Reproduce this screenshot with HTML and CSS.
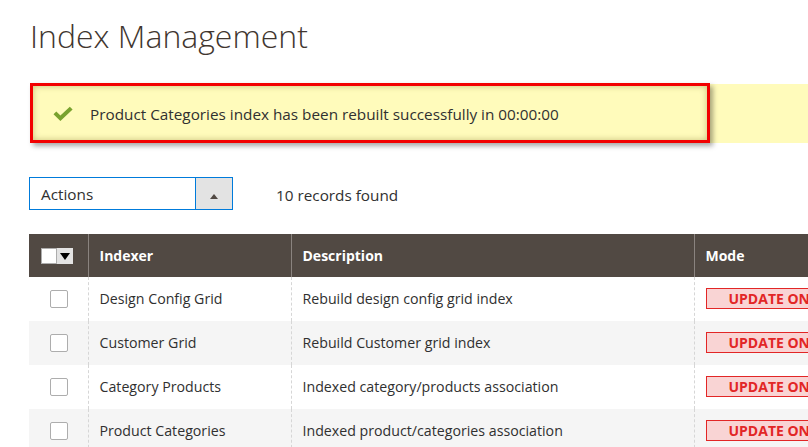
FILE: index.html
```html
<!DOCTYPE html>
<html>
<head>
<meta charset="utf-8">
<link rel="stylesheet" href="styles.css">
</head>
<body>
<div class="page">
  <h1 class="page-title">Index Management</h1>

  <div class="message-wrap">
    <div class="message">
      <svg class="check" width="22" height="16" viewBox="0 0 22 16"><path d="M1.5 8.2 L4.3 5.6 L8.4 9.6 L17.8 0.8 L20.6 3.4 L8.4 15 Z" fill="#79a22e"/></svg>
      <span>Product Categories index has been rebuilt successfully in 00:00:00</span>
    </div>
    <div class="annotation"></div>
  </div>

  <div class="toolbar">
    <div class="actions-select">
      <span class="actions-label">Actions</span>
      <span class="actions-btn"><span class="tri-up"></span></span>
    </div>
    <span class="records">10 records found</span>
  </div>

  <table class="grid">
    <colgroup>
      <col class="c-check"><col class="c-indexer"><col class="c-desc"><col class="c-mode">
    </colgroup>
    <thead>
      <tr>
        <th class="th-check"><span class="mass"><span class="mass-box"></span><span class="mass-arrow"><span class="tri-down"></span></span></span></th>
        <th>Indexer</th>
        <th>Description</th>
        <th>Mode</th>
      </tr>
    </thead>
    <tbody>
      <tr>
        <td class="td-check"><span class="cb"></span></td>
        <td>Design Config Grid</td>
        <td>Rebuild design config grid index</td>
        <td><span class="badge">UPDATE ON SAVE</span></td>
      </tr>
      <tr>
        <td class="td-check"><span class="cb"></span></td>
        <td>Customer Grid</td>
        <td>Rebuild Customer grid index</td>
        <td><span class="badge">UPDATE ON SAVE</span></td>
      </tr>
      <tr>
        <td class="td-check"><span class="cb"></span></td>
        <td>Category Products</td>
        <td>Indexed category/products association</td>
        <td><span class="badge">UPDATE ON SAVE</span></td>
      </tr>
      <tr>
        <td class="td-check"><span class="cb"></span></td>
        <td>Product Categories</td>
        <td>Indexed product/categories association</td>
        <td><span class="badge">UPDATE ON SAVE</span></td>
      </tr>
    </tbody>
  </table>
</div>
</body>
</html>
```

FILE: styles.css
```css
html, body {
  margin: 0;
  padding: 0;
  background: #fff;
  overflow: hidden;
}
body {
  font-family: "Open Sans", "Liberation Sans", sans-serif;
  color: #303030;
  font-size: 14px;
  width: 808px;
  height: 447px;
}
.page {
  width: 1100px;
  padding: 0 0 0 29px;
}
.page-title {
  margin: 0;
  padding-top: 14px;
  padding-left: 1px;
  font-size: 32px;
  font-weight: 300;
  line-height: 44px;
  color: #41362f;
  height: 70px;
}
.message-wrap {
  position: relative;
  margin-left: 1px;
}
.message {
  background: #fffbbb;
  height: 59px;
  display: flex;
  align-items: center;
  padding-left: 22px;
  box-sizing: border-box;
  font-size: 15.3px;
  color: #303030;
}
.check {
  margin-right: 16px;
  margin-top: 1px;
}
.message span {
  margin-top: 1px;
}
.annotation {
  position: absolute;
  left: 0;
  top: -1px;
  width: 680px;
  height: 60px;
  box-sizing: border-box;
  border: 3px solid #f20000;
  box-shadow: 3px 3px 5px rgba(0,0,0,0.35), inset 0 0 6px rgba(90,80,0,0.35);
}
.toolbar {
  display: flex;
  align-items: center;
  margin-top: 34px;
  height: 33px;
  font-size: 15.3px;
}
.actions-select {
  width: 204px;
  height: 33px;
  box-sizing: border-box;
  border: 1px solid #007bdb;
  display: flex;
  align-items: stretch;
}
.actions-label {
  flex: 1;
  padding-left: 11px;
  line-height: 33px;
  color: #303030;
}
.actions-btn {
  width: 36px;
  background: #e3e3e3;
  border-left: 1px solid #007bdb;
  display: flex;
  align-items: center;
  justify-content: center;
}
.tri-up {
  width: 0;
  height: 0;
  border-left: 4px solid transparent;
  border-right: 4px solid transparent;
  border-bottom: 5px solid #514943;
  margin-top: 6px;
}
.records {
  margin-left: 43px;
  color: #303030;
  margin-top: 3px;
}
.grid {
  margin-top: 24px;
  border-collapse: collapse;
  table-layout: fixed;
  width: 1060px;
}
.c-check { width: 59px; }
.c-indexer { width: 203px; }
.c-desc { width: 403px; }
.c-mode { width: 395px; }
.grid th {
  background: #514943;
  color: #fff;
  font-weight: 700;
  text-align: left;
  height: 43px;
  padding: 0 11px;
  border-left: 1px solid #8a837f;
  border-right: 1px solid #8a837f;
  box-sizing: border-box;
}
.grid th:first-child { border-left: none; }
.grid th.th-check { padding: 0 0 0 12px; }
.mass {
  display: inline-flex;
  height: 16px;
  vertical-align: middle;
  margin-top: -2px;
}
.mass-box {
  width: 16px;
  height: 16px;
  background: #fff;
  box-sizing: border-box;
  border: 1px solid #adadad;
}
.mass-arrow {
  width: 16px;
  height: 16px;
  background: #e3e3e3;
  display: flex;
  align-items: center;
  justify-content: center;
}
.tri-down {
  width: 0;
  height: 0;
  border-left: 5px solid transparent;
  border-right: 5px solid transparent;
  border-top: 7px solid #000;
}
.grid td {
  height: 44px;
  padding: 0 11px 2px;
  box-sizing: border-box;
  border-left: 1px dashed #d6d6d6;
  border-right: 1px dashed #d6d6d6;
  color: #303030;
  white-space: nowrap;
  font-size: 14.2px;
}
.grid td:first-child { border-left: none; }
.grid tbody tr:nth-child(even) td { background: #f5f5f5; }
.grid td.td-check { padding: 0 0 0 21px; }
.cb {
  display: block;
  width: 18px;
  height: 18px;
  box-sizing: border-box;
  border: 1px solid #adadad;
  border-radius: 2px;
  background: #fff;
}
.badge {
  display: inline-block;
  height: 21px;
  line-height: 19px;
  box-sizing: border-box;
  padding: 0 22px;
  border: 1px solid #e22626;
  background: #f9d4d4;
  color: #e22626;
  font-weight: 700;
  font-size: 14px;
  vertical-align: middle;
}
```
